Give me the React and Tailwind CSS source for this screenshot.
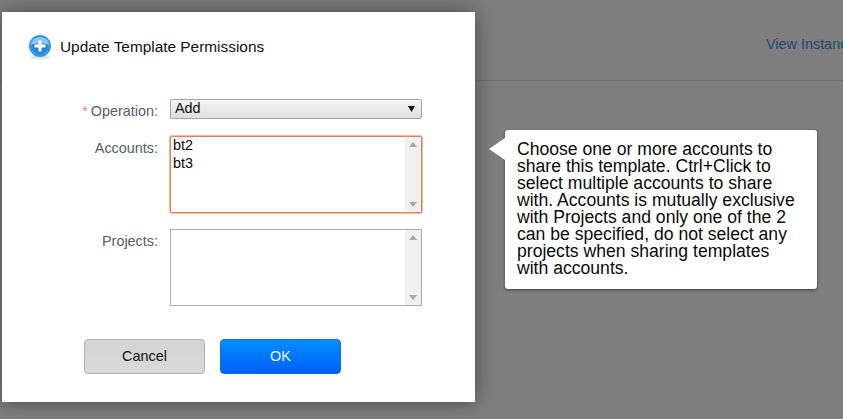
import React from "react";

const ScrollColumn = () => (
  <div className="flex w-4 flex-col items-center justify-between bg-[#f0f0f0] py-[5px]">
    <svg width="8" height="5" viewBox="0 0 8 5"><path d="M4 0L8 5H0z" fill="#a8a8a8" /></svg>
    <svg width="8" height="5" viewBox="0 0 8 5"><path d="M0 0H8L4 5z" fill="#a8a8a8" /></svg>
  </div>
);

const ListBox = ({ items = [], error }) => (
  <div
    className={
      "flex h-[77px] w-[252px] border bg-white " +
      (error
        ? "rounded-[2px] border-[#e07f60] shadow-[0_0_0_1px_#f2b9a5]"
        : "border-[#adadad]")
    }
  >
    <div className="flex-1 pl-[2px] text-[14.4px] leading-[17.5px] text-[#0b0b0b]">
      {items.map((item) => (
        <div key={item}>{item}</div>
      ))}
    </div>
    <ScrollColumn />
  </div>
);

const Label = ({ children, required }) => (
  <div className="w-[156px] pt-[3px] text-right text-[14.4px] leading-[18px] text-[#51606e]">
    {required && <span className="mr-[3px] text-[#ef7f7f]">*</span>}
    {children}
  </div>
);

const AddIcon = () => (
  <svg width="24" height="26" viewBox="0 0 24 26">
    <ellipse cx="12" cy="23.5" rx="10" ry="2" fill="#e4e4e4" />
    <circle cx="12" cy="12" r="11" fill="#3a97dc" />
    <circle cx="12" cy="12" r="8" fill="#1f86d6" />
    <path d="M3 11a9 8 0 0 1 18 0c-4-2-14-2-18 0z" fill="#8cc6ee" />
    <path d="M10.500 6.500h3V10.500h4v3h-4V17.500h-3V13.500h-4v-3h4z" fill="#fff" />
  </svg>
);

const App = () => (
  <div className="relative h-[419px] w-[843px] overflow-hidden bg-[#7f7f7f] font-['Liberation_Sans',sans-serif]">
    {/* page behind the overlay */}
    <div className="flex h-[81px] items-start justify-end overflow-hidden border-b border-[#717171] pt-[35px]">
      <a className="w-[77px] whitespace-nowrap text-[14.4px] leading-[18px] text-[#1a4a6e]">
        View Instances
      </a>
    </div>

    {/* dialog */}
    <div className="absolute top-[12px] left-[2px] flex h-[390px] w-[473px] flex-col bg-white shadow-[0_0_20px_rgba(0,0,0,0.45)]">
      <div className="flex items-center pt-[22px] pl-[26px]">
        <AddIcon />
        <h1 className="ml-[8px] text-[15.4px] leading-[26px] text-[#111]">
          Update Template Permissions
        </h1>
      </div>

      <div className="mt-[39px] flex flex-col">
        <div className="flex gap-[12px]">
          <Label required>Operation:</Label>
          <div className="flex h-[20px] w-[252px] items-center justify-between rounded-[2px] border border-[#a3a3a3] bg-gradient-to-b from-[#f4f4f4] to-[#dedede] pr-[6px] pl-[4px] text-[14.4px] text-[#111]">
            <span>Add</span>
            <svg width="7" height="7" viewBox="0 0 7 7"><path d="M0 0H7L3.500 6z" fill="#111" /></svg>
          </div>
        </div>
        <div className="mt-[16px] flex gap-[12px]">
          <Label>Accounts:</Label>
          <ListBox items={["bt2", "bt3"]} error />
        </div>
        <div className="mt-[16px] flex gap-[12px]">
          <Label>Projects:</Label>
          <ListBox />
        </div>
      </div>

      <div className="mt-[33px] flex gap-[15px] pl-[82px]">
        <button className="h-[35px] w-[121px] rounded-[4px] border border-[#b0b0b0] bg-gradient-to-b from-[#d4d4d4] to-[#dadada] text-[14.4px] text-[#111]">
          Cancel
        </button>
        <button className="h-[35px] w-[121px] rounded-[4px] border border-[#0a6fd8] bg-gradient-to-b from-[#0a8cff] to-[#0060f5] text-[14.4px] text-[#eef6ff]">
          OK
        </button>
      </div>
    </div>

    {/* help tooltip */}
    <div className="absolute top-[130px] left-[505px] h-[159px] w-[312px] rounded-[3px] bg-white py-[11px] pr-[18px] pl-[12px] text-[17.6px] leading-[17px] text-[#0a0a0a] shadow-[0_1px_3px_rgba(0,0,0,0.55)]">
      <div className="absolute top-[8px] -left-[16px] h-0 w-0 border-y-[11px] border-r-[16px] border-y-transparent border-r-white" />
      Choose one or more accounts to share this template. Ctrl+Click to select multiple accounts to share with. Accounts is mutually exclusive with Projects and only one of the 2 can be specified, do not select any projects when sharing templates with accounts.
    </div>
  </div>
);

export default App;
